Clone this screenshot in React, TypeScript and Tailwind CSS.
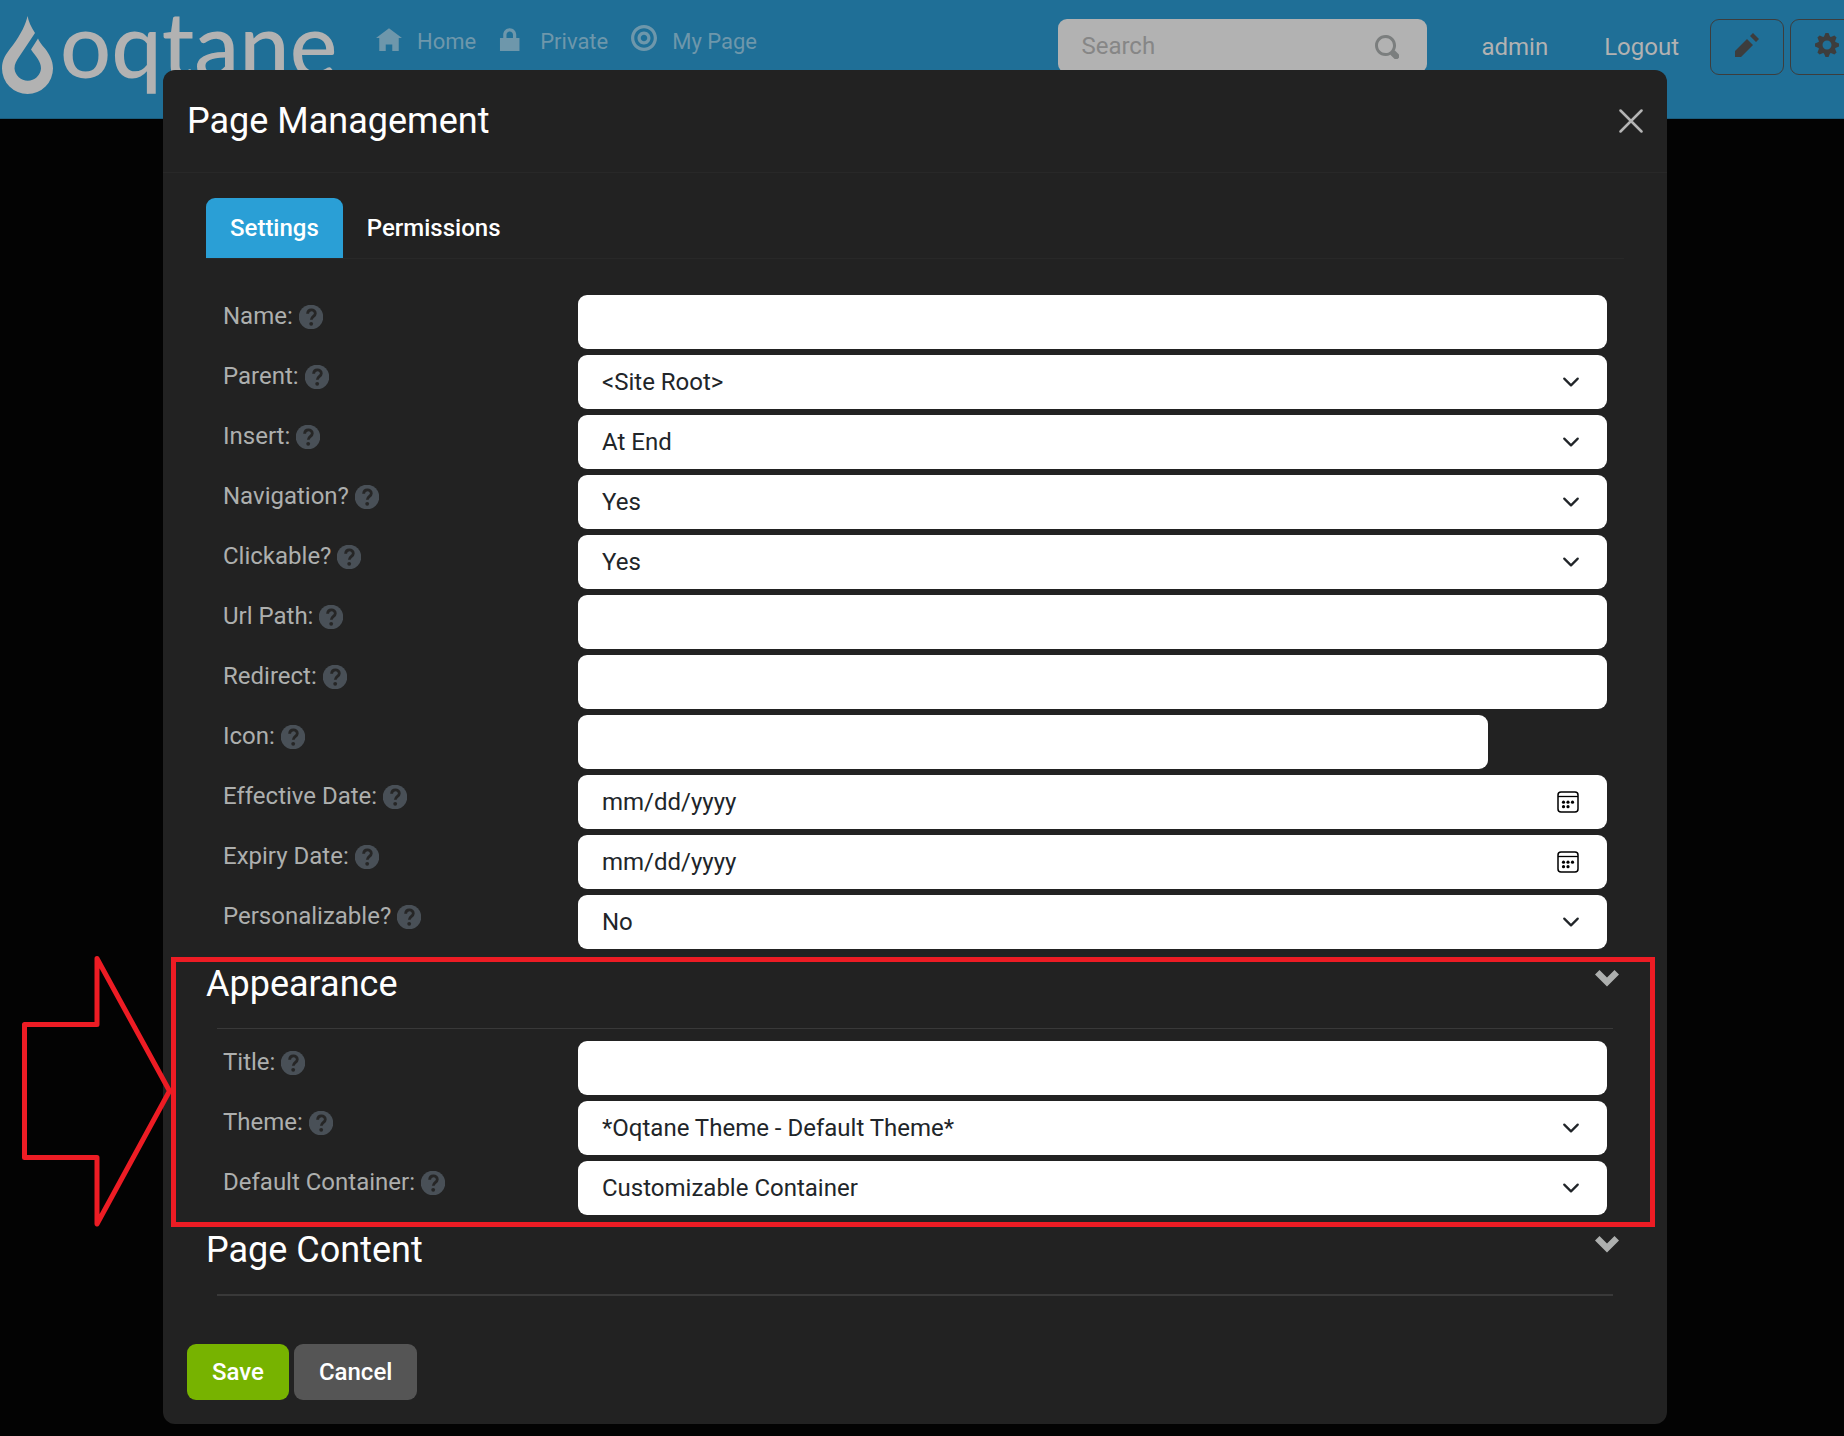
import { useState } from 'react';
import type { ReactNode } from 'react';

const ICONS = {
  home: 'M4 1l-4 3h1v4h2v-2h2v2h2v-4.03l1 .03-4-3z',
  lock: 'M3.300 1c-1.100 0-2 .9-2 2v1h-1v4h6v-4h-1v-1c0-1.100-.9-2-2-2zm0 1c.56 0 1 .44 1 1v1h-2v-1c0-.56.44-1 1-1z',
  target:
    'M4 0c-2.2 0-4 1.8-4 4s1.8 4 4 4 4-1.8 4-4-1.8-4-4-4zm0 1c1.66 0 3 1.34 3 3s-1.34 3-3 3-3-1.34-3-3 1.34-3 3-3zm0 1c-1.1 0-2 .9-2 2s.9 2 2 2 2-.9 2-2-.9-2-2-2zm0 1c.56 0 1 .44 1 1s-.44 1-1 1-1-.44-1-1 .44-1 1-1z',
  chevron: 'M1.5 1l-1.5 1.5 4 4 4-4-1.5-1.5-2.5 2.5-2.5-2.5z',
  pencil: 'M6 0l-1 1 2 2 1-1-2-2zm-2 2l-4 4v2h2l4-4-2-2z',
  cog: 'M3.5 0l-.5 1.19c-.1.03-.19.08-.28.13l-1.19-.5-.72.72.5 1.19c-.05.1-.09.18-.13.28l-1.19.5v1l1.19.5c.04.1.08.18.13.28l-.5 1.19.72.72 1.19-.5c.09.04.18.09.28.13l.5 1.19h1l.5-1.19c.09-.04.19-.08.28-.13l1.19.5.72-.72-.5-1.19c.04-.09.09-.19.13-.28l1.19-.5v-1l-1.19-.5c-.03-.09-.08-.19-.13-.28l.5-1.19-.72-.72-1.19.5c-.09-.04-.19-.09-.28-.13l-.5-1.19h-1zm.5 2.5c.83 0 1.5.67 1.5 1.5s-.67 1.5-1.5 1.5-1.5-.67-1.5-1.5.67-1.5 1.5-1.5z',
  search:
    'M3.5 0c-1.93 0-3.5 1.57-3.5 3.5s1.57 3.5 3.5 3.5c.59 0 1.17-.14 1.66-.41a1 1 0 0 0 .13.13l1 1a1.02 1.02 0 1 0 1.44-1.44l-1-1a1 1 0 0 0-.16-.13c.27-.49.44-1.06.44-1.66 0-1.93-1.55-3.5-3.5-3.5zm0 1c1.39 0 2.5 1.11 2.5 2.5 0 .66-.24 1.27-.66 1.72l-.03.03a1 1 0 0 0-.13.13c-.44.4-1.04.63-1.69.63-1.39 0-2.5-1.11-2.5-2.5s1.11-2.5 2.5-2.5z',
};

function Icon({ name, className = 'size-6' }: { name: keyof typeof ICONS; className?: string }) {
  return (
    <svg viewBox="0 0 8 8" fill="currentColor" className={className} aria-hidden="true">
      <path d={ICONS[name]} />
    </svg>
  );
}

function HelpIcon() {
  return (
    <svg viewBox="0 0 24 24" className="mt-[2px] size-6" aria-hidden="true">
      <circle cx="12" cy="12" r="12.3" fill="#495057" />
      <path
        d="M8.600 8.800C8.800 3.600 16.300 3.900 16.300 8.400C16.300 11.400 12.300 11.300 12.300 14.800"
        fill="none"
        stroke="#262626"
        strokeWidth="2.8"
      />
      <circle cx="12.200" cy="18.800" r="1.900" fill="#262626" />
    </svg>
  );
}

function CalendarIcon() {
  return (
    <svg
      viewBox="0 0 24 24"
      fill="none"
      stroke="black"
      className="pointer-events-none absolute top-1/2 right-[27px] size-6 -translate-y-1/2"
      aria-hidden="true"
    >
      <rect x="2" y="2" width="20" height="20" rx="3" strokeWidth="1.5" />
      <path d="M2 6.5h20" strokeWidth="1.3" />
      <g fill="black" stroke="none">
        <circle cx="7.5" cy="12.2" r="1.6" />
        <circle cx="12" cy="12.2" r="1.6" />
        <circle cx="16.5" cy="12.2" r="1.6" />
        <circle cx="7.5" cy="16.7" r="1.6" />
        <circle cx="12" cy="16.7" r="1.6" />
      </g>
    </svg>
  );
}

type Field = {
  id: string;
  label: string;
  type: 'text' | 'select' | 'date';
  value?: string;
  short?: boolean;
};

const settingsFields: Field[] = [
  { id: 'name', label: 'Name:', type: 'text' },
  { id: 'parent', label: 'Parent:', type: 'select', value: '<Site Root>' },
  { id: 'insert', label: 'Insert:', type: 'select', value: 'At End' },
  { id: 'navigation', label: 'Navigation?', type: 'select', value: 'Yes' },
  { id: 'clickable', label: 'Clickable?', type: 'select', value: 'Yes' },
  { id: 'path', label: 'Url Path:', type: 'text' },
  { id: 'redirect', label: 'Redirect:', type: 'text' },
  { id: 'icon', label: 'Icon:', type: 'text', short: true },
  { id: 'effective', label: 'Effective Date:', type: 'date' },
  { id: 'expiry', label: 'Expiry Date:', type: 'date' },
  { id: 'personalizable', label: 'Personalizable?', type: 'select', value: 'No' },
];

const appearanceFields: Field[] = [
  { id: 'title', label: 'Title:', type: 'text' },
  { id: 'theme', label: 'Theme:', type: 'select', value: '*Oqtane Theme - Default Theme*' },
  { id: 'container', label: 'Default Container:', type: 'select', value: 'Customizable Container' },
];

const controlClass =
  'block h-[54px] w-full appearance-none rounded-[9px] bg-white px-6 text-2xl text-[#212529] outline-none';

const dateClass =
  '[&::-webkit-calendar-picker-indicator]:opacity-0 [&::-webkit-datetime-edit-month-field]:p-0 [&::-webkit-datetime-edit-day-field]:p-0 [&::-webkit-datetime-edit-year-field]:p-0';

function FieldRow({ field }: { field: Field }) {
  return (
    <div className="flex">
      <div className="w-[355px] shrink-0 pt-[3px]">
        <label htmlFor={field.id} className="inline-flex items-center gap-[6px] text-2xl leading-9 text-[#adafae]">
          {field.label}
          <HelpIcon />
        </label>
      </div>
      <div className={field.short ? 'relative mr-[119px] grow' : 'relative grow'}>
        {field.type === 'text' && <input id={field.id} type="text" className={controlClass} />}
        {field.type === 'date' && (
          <>
            <input id={field.id} type="date" className={`${controlClass} ${dateClass}`} />
            <CalendarIcon />
          </>
        )}
        {field.type === 'select' && (
          <>
            <select id={field.id} className={controlClass}>
              <option>{field.value}</option>
            </select>
            <svg
              viewBox="0 0 16 16"
              fill="none"
              stroke="#212529"
              strokeWidth="2"
              strokeLinecap="round"
              strokeLinejoin="round"
              className="pointer-events-none absolute top-1/2 right-[27px] size-[18px] -translate-y-1/2"
              aria-hidden="true"
            >
              <path d="M2 5l6 6 6-6" />
            </svg>
          </>
        )}
      </div>
    </div>
  );
}

function SectionHeading({ children }: { children: ReactNode }) {
  return (
    <div className="flex h-[79px] items-start justify-between pt-[14px] pr-[5px]">
      <h2 className="text-4xl leading-[42px] text-white">{children}</h2>
      <button type="button" className="mt-1 text-[#adafae]" aria-label="Toggle section">
        <Icon name="chevron" />
      </button>
    </div>
  );
}

function Header() {
  const links = [
    { label: 'Home', icon: 'home' as const },
    { label: 'Private', icon: 'lock' as const },
    { label: 'My Page', icon: 'target' as const },
  ];

  return (
    <header className="flex h-[119px] items-start border-b border-[#1a5c7d] bg-[#1f6f97]">
      <a href="#" className="flex w-[336px] shrink-0 items-start text-[#b2b2b2]" aria-label="oqtane">
        <svg viewBox="0 0 56 96" fill="currentColor" className="h-24 w-14 shrink-0" aria-hidden="true">
          <path d="M27.5 16C26 24 21 34 13 45 5 55 2 60 2 68.500A25.500 25.500 0 0 0 53 68.500C53 60 49 54 45 48.500 41 44 39 41 38 38.500L31 49.500C36 57 41 61 41 68.500A13.300 13.300 0 0 1 14.500 68.500C14.500 64 16.500 60.500 19 57L35 33C31 27 28.500 21 27.500 16z" />
        </svg>
        <span className="ml-1 font-[Lato] text-[90px] leading-[86px] font-medium">oqtane</span>
      </a>
      <nav className="ml-10 flex gap-[23px] pt-[25px] text-[22px] leading-[34px] text-[#6e97ab]">
        {links.map((link) => (
          <a key={link.label} href="#" className="flex gap-[15px]">
            <Icon name={link.icon} className="size-[26px]" />
            {link.label}
          </a>
        ))}
      </nav>
      <div className="-mr-5 ml-auto flex shrink-0 pt-[19px] text-2xl text-[#b2b2b2]">
        <div className="relative">
          <input
            type="search"
            aria-label="Search"
            placeholder="Search"
            className="h-[54px] w-[369px] rounded-[9px] bg-[#b2b2b2] px-[23px] placeholder:text-[#868686]"
          />
          <button type="button" aria-label="Search" className="absolute top-4 right-7 text-[#7b7e7e]">
            <Icon name="search" />
          </button>
        </div>
        <a href="#" className="ml-[54px] leading-[56px]">
          admin
        </a>
        <a href="#" className="ml-14 leading-[56px]">
          Logout
        </a>
        <div className="ml-[31px] flex gap-[6px] text-[#3d3d3d]">
          <button
            type="button"
            aria-label="Edit"
            className="flex h-14 w-[74px] justify-center rounded-[9px] border border-[#3d3d3d] pt-[13px]"
          >
            <Icon name="pencil" />
          </button>
          <button
            type="button"
            aria-label="Control panel"
            className="flex h-14 w-[74px] justify-center rounded-[9px] border border-[#3d3d3d] pt-[13px]"
          >
            <Icon name="cog" />
          </button>
        </div>
      </div>
    </header>
  );
}

export default function App() {
  const [tab, setTab] = useState('Settings');

  return (
    <div className="relative min-h-screen overflow-hidden bg-[#030303] font-[Roboto,sans-serif]">
      <Header />

      <div className="absolute inset-x-0 top-[70px] pr-[177px] pl-[163px]">
        <div role="dialog" aria-label="Page Management" className="relative rounded-xl bg-[#222222] pb-6">
          <div className="flex h-[103px] items-start justify-between border-b border-[#282828] px-6 pt-[30px]">
            <h1 className="text-4xl leading-[43px] text-white">Page Management</h1>
            <button type="button" aria-label="Close" className="mt-[9px] text-[#b4b4b4]">
              <svg
                viewBox="0 0 24 24"
                fill="none"
                stroke="currentColor"
                strokeWidth="2.5"
                strokeLinecap="round"
                className="size-6"
                aria-hidden="true"
              >
                <path d="M1.500 1.500l21 21M22.500 1.500l-21 21" />
              </svg>
            </button>
          </div>

          <div className="px-[43px] pt-[25px]">
            <div role="tablist" className="flex border-b border-[#282828]">
              {['Settings', 'Permissions'].map((name) => (
                <button
                  key={name}
                  type="button"
                  role="tab"
                  aria-selected={tab === name}
                  onClick={() => setTab(name)}
                  className={`h-[60px] rounded-t-[9px] px-6 text-2xl font-medium text-white ${
                    tab === name ? 'bg-[#2a9fd6]' : ''
                  }`}
                >
                  {name}
                </button>
              ))}
            </div>

            <div className="flex flex-col gap-[6px] px-[17px] pt-9">
              {settingsFields.map((field) => (
                <FieldRow key={field.id} field={field} />
              ))}
            </div>

            <SectionHeading>Appearance</SectionHeading>
            <hr className="mx-[11px] border-[#393939]" />
            <div className="flex flex-col gap-[6px] px-[17px] pt-3">
              {appearanceFields.map((field) => (
                <FieldRow key={field.id} field={field} />
              ))}
            </div>

            <SectionHeading>Page Content</SectionHeading>
            <hr className="mx-[11px] border-t-2 border-[#393939]" />
          </div>

          <div className="flex gap-[5px] px-6 pt-12 text-2xl font-medium text-white">
            <button type="button" className="h-14 rounded-[9px] bg-[#77b300] px-[25px]">
              Save
            </button>
            <button type="button" className="h-14 rounded-[9px] bg-[#555555] px-[25px]">
              Cancel
            </button>
          </div>

          {/* Highlight around the Appearance section */}
          <div className="pointer-events-none absolute top-[887px] right-3 left-2 h-[270px] border-[5px] border-[#ed1c24]" />
        </div>
      </div>

      <svg
        viewBox="0 0 152 272"
        fill="none"
        stroke="#ed1c24"
        strokeWidth="5"
        strokeLinejoin="round"
        className="pointer-events-none absolute top-[955px] left-5 h-[272px] w-[152px]"
        aria-hidden="true"
      >
        <path d="M4.500 69.500h72.500v-66l72.500 132.500-72.500 133v-66.500h-72.500z" />
      </svg>
    </div>
  );
}
